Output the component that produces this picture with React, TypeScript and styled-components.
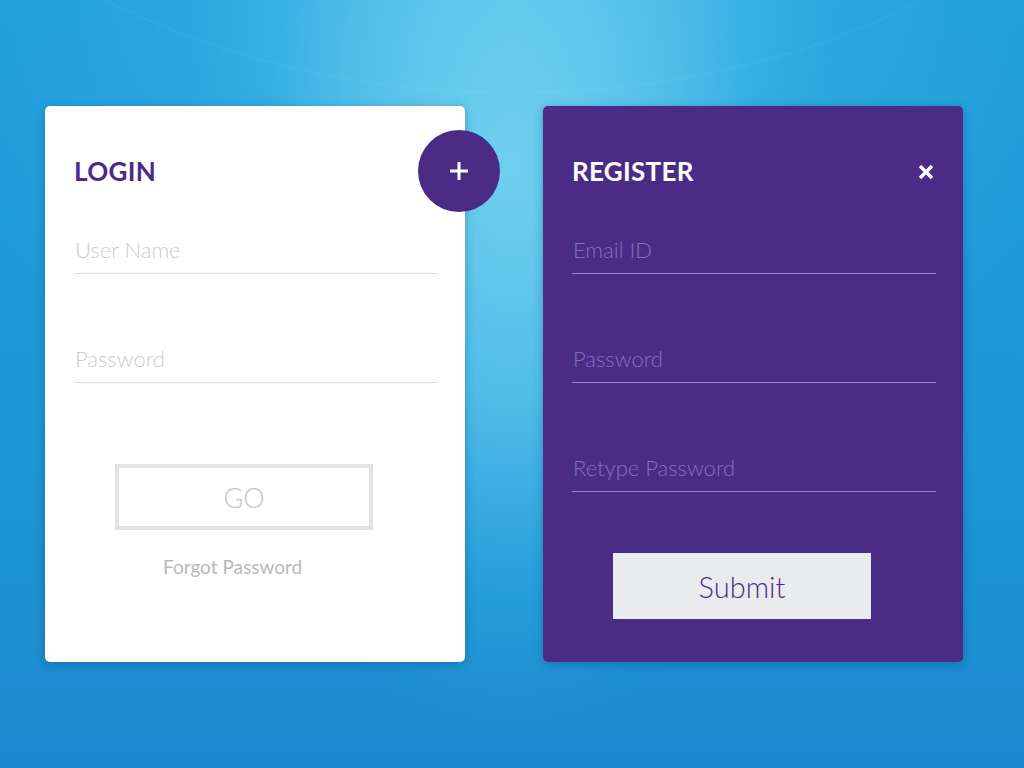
import React from "react";
import styled, { createGlobalStyle } from "styled-components";

const Global = createGlobalStyle`
  html, body { margin: 0; padding: 0; }
  body { font-family: Lato, "Open Sans", sans-serif; }
  * { box-sizing: border-box; }
`;

const PURPLE = "#4a2c86";

const Page = styled.div`
  position: relative;
  width: 1024px;
  height: 768px;
  overflow: hidden;
  background:
    radial-gradient(ellipse 330px 560px at 50% 22%, rgba(118, 210, 240, 0.9) 0%, rgba(96, 200, 238, 0.75) 40%, rgba(60, 180, 230, 0.35) 75%, rgba(30, 150, 215, 0) 100%),
    radial-gradient(ellipse 620px 480px at 50% 0%, rgba(100, 204, 240, 0.8) 0%, rgba(60, 182, 230, 0.5) 50%, rgba(30, 150, 215, 0) 100%),
    linear-gradient(180deg, #1c9bd9 0%, #1d97d7 55%, #1b89cf 100%);
  &::before {
    content: "";
    position: absolute;
    left: 50%;
    top: -900px;
    width: 1400px;
    height: 990px;
    margin-left: -700px;
    border-radius: 50%;
    border: 2px solid rgba(255, 255, 255, 0.04);
    pointer-events: none;
  }
`;

const Row = styled.div`
  position: relative;
  display: flex;
  gap: 78px;
  padding: 106px 0 0 45px;
`;

const Card = styled.div<{ $dark?: boolean }>`
  position: relative;
  width: 420px;
  height: 556px;
  border-radius: 5px;
  background: ${(p) => (p.$dark ? PURPLE : "#ffffff")};
  box-shadow: 0 2px 10px rgba(10, 40, 90, 0.3);
  padding: 50px 27px 0 29px;
  display: flex;
  flex-direction: column;
`;

const Header = styled.div`
  display: flex;
  align-items: center;
  justify-content: space-between;
  height: 30px;
`;

const Title = styled.h2<{ $dark?: boolean }>`
  margin: 0;
  font-family: Lato, sans-serif;
  font-weight: 700;
  font-size: 26px;
  line-height: 30px;
  letter-spacing: 0.3px;
  color: ${(p) => (p.$dark ? "#ffffff" : PURPLE)};
`;

const CloseButton = styled.button`
  border: 0;
  background: none;
  padding: 0;
  margin: 2px 2px 0 0;
  width: 16px;
  height: 16px;
  display: flex;
  cursor: pointer;
`;

const Fab = styled.button`
  position: absolute;
  top: 24px;
  right: -35px;
  width: 82px;
  height: 82px;
  border-radius: 50%;
  border: 0;
  background: ${PURPLE};
  display: flex;
  align-items: center;
  justify-content: center;
  cursor: pointer;
  padding: 0;
`;

const Input = styled.input<{ $dark?: boolean; $gap: number }>`
  display: block;
  width: 100%;
  height: 40px;
  margin-top: ${(p) => p.$gap}px;
  padding: 0 0 9px 1px;
  border: 0;
  border-bottom: 1px solid ${(p) => (p.$dark ? "#9a85cc" : "#dcdcdc")};
  background: transparent;
  outline: none;
  font-family: Lato, sans-serif;
  font-weight: 300;
  font-size: 22px;
  line-height: 30px;
  color: ${(p) => (p.$dark ? "#ffffff" : "#555")};
  &::placeholder {
    color: ${(p) => (p.$dark ? "#8670bd" : "#cbcbcb")};
    opacity: 1;
  }
`;

const GoButton = styled.button`
  margin: 81px 0 0 41px;
  width: 258px;
  height: 66px;
  border: 4px solid #e3e3e3;
  background: #ffffff;
  font-family: Lato, sans-serif;
  font-weight: 300;
  font-size: 27px;
  color: #c4c4c4;
  cursor: pointer;
  padding: 0;
`;

const Forgot = styled.a`
  display: block;
  margin: 25px 0 0 89px;
  font-family: Lato, sans-serif;
  font-weight: 400;
  font-size: 19px;
  line-height: 24px;
  color: #b9b9b9;
  text-decoration: none;
  cursor: pointer;
`;

const SubmitButton = styled.button`
  margin: 61px 0 0 41px;
  width: 258px;
  height: 66px;
  border: 0;
  background: #eaebed;
  font-family: Lato, sans-serif;
  font-weight: 300;
  font-size: 29px;
  color: ${PURPLE};
  cursor: pointer;
  padding: 0;
`;

const PlusIcon = () => (
  <svg width="20" height="20" viewBox="0 0 20 20">
    <path d="M10 1v18M1 10h18" stroke="#fff" strokeWidth="3" fill="none" />
  </svg>
);

const XIcon = () => (
  <svg width="16" height="16" viewBox="0 0 16 16">
    <path d="M2 2l12 12M14 2L2 14" stroke="#fff" strokeWidth="3.4" fill="none" />
  </svg>
);

export default function App() {
  return (
    <Page>
      <Global />
      <Row>
        <Card>
          <Header>
            <Title>LOGIN</Title>
          </Header>
          <Fab aria-label="open register">
            <PlusIcon />
          </Fab>
          <Input $gap={48} placeholder="User Name" />
          <Input $gap={69} type="password" placeholder="Password" />
          <GoButton>GO</GoButton>
          <Forgot>Forgot Password</Forgot>
        </Card>
        <Card $dark>
          <Header>
            <Title $dark>REGISTER</Title>
            <CloseButton aria-label="close">
              <XIcon />
            </CloseButton>
          </Header>
          <Input $dark $gap={48} placeholder="Email ID" />
          <Input $dark $gap={69} type="password" placeholder="Password" />
          <Input $dark $gap={69} type="password" placeholder="Retype Password" />
          <SubmitButton>Submit</SubmitButton>
        </Card>
      </Row>
    </Page>
  );
}
